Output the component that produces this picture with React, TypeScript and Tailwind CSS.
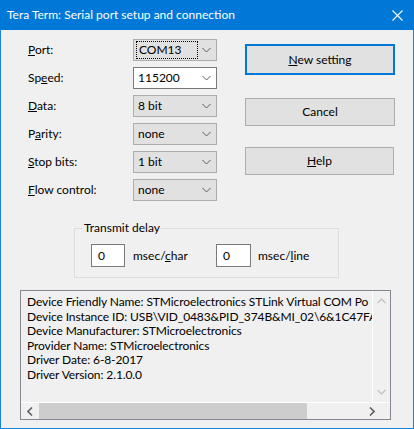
import React from 'react'

const font = { fontFamily: 'Lato, "Noto Sans", sans-serif' }

const Chevron: React.FC = () => (
  <svg width="9" height="6" viewBox="0 0 9 6" className="shrink-0">
    <polyline points="0.5,1 4.5,5 8.5,1" fill="none" stroke="#5f5f5f" strokeWidth="1" />
  </svg>
)

const Combo: React.FC<{ value: string; editable?: boolean; focused?: boolean }> = ({ value, editable, focused }) => (
  <div
    className={`h-[22px] w-[84px] flex items-center justify-between pr-[5px] border ${
      editable ? 'bg-white border-[#7a7a7a]' : 'bg-[#e1e1e1] border-[#adadad]'
    }`}
  >
    {focused ? (
      <div className="ml-[2px] h-[18px] w-[62px] border border-dotted border-black flex items-center pl-[2px]">{value}</div>
    ) : (
      <div className="pl-[4px]">{value}</div>
    )}
    <Chevron />
  </div>
)

const rows: { label: React.ReactNode; value: string; editable?: boolean; focused?: boolean }[] = [
  { label: <><u>P</u>ort:</>, value: 'COM13', focused: true },
  { label: <>Sp<u>e</u>ed:</>, value: '115200', editable: true },
  { label: <><u>D</u>ata:</>, value: '8 bit' },
  { label: <>P<u>a</u>rity:</>, value: 'none' },
  { label: <><u>S</u>top bits:</>, value: '1 bit' },
  { label: <><u>F</u>low control:</>, value: 'none' },
]

// the box only shows the start of the long lines
const info = [
  'Device Friendly Name: STMicroelectronics STLink Virtual COM Po',
  'Device Instance ID: USB\\VID_0483&PID_374B&MI_02\\6&1C47FAA',
  'Device Manufacturer: STMicroelectronics',
  'Provider Name: STMicroelectronics',
  'Driver Date: 6-8-2017',
  'Driver Version: 2.1.0.0',
]

const App: React.FC = () => {
  return (
    <div className="w-[414px] h-[429px] flex flex-col bg-[#f0f0f0] text-[12px] text-black" style={font}>
      <div className="h-[30px] bg-[#0078d7] text-white flex items-center justify-between pl-[7px] pr-[11px] shrink-0">
        <span className="text-[12px]">Tera Term: Serial port setup and connection</span>
        <svg width="11" height="11" viewBox="0 0 11 11">
          <path d="M0.5 0.5 L10.5 10.5 M10.5 0.5 L0.5 10.5" stroke="white" strokeWidth="1.1" />
        </svg>
      </div>
      <div className="flex-1 border-x border-b border-[#1883d7] flex flex-col">
        <div className="flex">
          <div className="pl-[27px] pt-[9px] flex flex-col gap-[6px]">
            {rows.map((r, i) => (
              <div key={i} className="flex items-center h-[22px]">
                <div className="w-[105px]">{r.label}</div>
                <Combo value={r.value} editable={r.editable} focused={r.focused} />
              </div>
            ))}
          </div>
          <div className="ml-[28px] pt-[14px] flex flex-col">
            <div className="w-[150px] h-[31px] border-2 border-[#0078d7] bg-[#e1e1e1] flex items-center justify-center">
              <span><u>N</u>ew setting</span>
            </div>
            <div className="mt-[23px] w-[150px] h-[28px] border border-[#adadad] bg-[#e1e1e1] flex items-center justify-center">
              Cancel
            </div>
            <div className="mt-[21px] w-[149px] h-[28px] border border-[#adadad] bg-[#e1e1e1] flex items-center justify-center">
              <span><u>H</u>elp</span>
            </div>
          </div>
        </div>

        <div className="relative mt-[27px] ml-[73px] w-[265px] h-[50px] border border-[#dcdcdc]">
          <span className="absolute left-[8px] top-[-9px] px-[1px] bg-[#f0f0f0] leading-[16px]">Transmit delay</span>
          <div className="flex items-center pt-[15px] pl-[16px]">
            <div className="w-[125px] flex items-center">
              <div className="w-[34px] h-[23px] bg-white border border-[#7a7a7a] flex items-center pl-[6px]">0</div>
              <span className="ml-[8px]">msec/<u>c</u>har</span>
            </div>
            <div className="w-[35px] h-[23px] bg-white border border-[#7a7a7a] flex items-center pl-[6px]">0</div>
            <span className="ml-[7px]">msec/<u>l</u>ine</span>
          </div>
        </div>

        <div className="mt-[12px] ml-[19px] w-[371px] h-[130px] border border-[#828790] flex flex-col">
          <div className="flex flex-1 min-h-0">
            <div className="flex-1 overflow-hidden pl-[6px] pt-[4px] leading-[14.6px] whitespace-nowrap tracking-[-0.1px]">
              {info.map((l) => (
                <div key={l}>{l}</div>
              ))}
            </div>
            <div className="w-[18px] border-l border-white flex flex-col items-center justify-between py-[7px]">
              <svg width="9" height="6" viewBox="0 0 9 6">
                <polyline points="0.5,5 4.5,1 8.5,5" fill="none" stroke="#c4c4c4" strokeWidth="1.3" />
              </svg>
              <svg width="9" height="6" viewBox="0 0 9 6">
                <polyline points="0.5,1 4.5,5 8.5,1" fill="none" stroke="#c4c4c4" strokeWidth="1.3" />
              </svg>
            </div>
          </div>
          <div className="h-[17px] border-t border-white flex items-center">
            <div className="w-[18px] flex items-center justify-center">
              <svg width="6" height="9" viewBox="0 0 6 9">
                <polyline points="5,0.5 1,4.5 5,8.5" fill="none" stroke="#606060" strokeWidth="1.6" />
              </svg>
            </div>
            <div className="w-[268px] h-[16px] bg-[#cdcdcd]" />
            <div className="flex-1" />
            <div className="w-[36px] flex items-center justify-center">
              <svg width="6" height="9" viewBox="0 0 6 9">
                <polyline points="1,0.5 5,4.5 1,8.5" fill="none" stroke="#606060" strokeWidth="1.6" />
              </svg>
            </div>
          </div>
        </div>
      </div>
    </div>
  )
}

export default App
